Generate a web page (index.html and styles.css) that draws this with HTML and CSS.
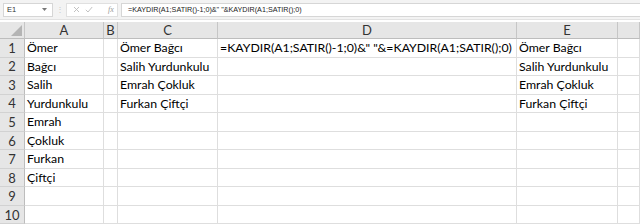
FILE: index.html
```html
<!DOCTYPE html>
<html lang="tr">
<head>
  <meta charset="UTF-8">
  <title>Excel - KAYDIR</title>
  <link rel="stylesheet" href="styles.css">
</head>
<body>
  <div class="formula-bar">
    <div class="name-box">
      <span>E1</span>
      <svg class="arrow" width="5" height="3" viewBox="0 0 5 3"><path d="M0 0 L5 0 L2.5 3 Z" fill="#777"/></svg>
    </div>
    <div class="grip">⋮</div>
    <div class="fx-buttons">
      <svg width="7" height="7" viewBox="0 0 7 7"><path d="M1 1 L6 6 M6 1 L1 6" stroke="#bbb" stroke-width="0.9" fill="none"/></svg>
      <svg width="8" height="7" viewBox="0 0 8 7"><path d="M0.8 3.8 L3 6 L7.2 1" stroke="#bbb" stroke-width="0.9" fill="none"/></svg>
      <span class="fx">fx</span>
    </div>
    <div class="formula-input">=KAYDIR(A1;SATIR()-1;0)&amp;" "&amp;KAYDIR(A1;SATIR();0)</div>
  </div>

  <div class="sheet">
    <div class="hd corner"><span class="tri"></span></div>
    <div class="hd col">A</div>
    <div class="hd col">B</div>
    <div class="hd col">C</div>
    <div class="hd col">D</div>
    <div class="hd col">E</div>
    <div class="hd col"></div>

    <div class="hd row">1</div><div class="cell">Ömer</div><div class="cell"></div><div class="cell">Ömer Bağcı</div><div class="cell">=KAYDIR(A1;SATIR()-1;0)&amp;" "&amp;=KAYDIR(A1;SATIR();0)</div><div class="cell">Ömer Bağcı</div><div class="cell"></div>
    <div class="hd row">2</div><div class="cell">Bağcı</div><div class="cell"></div><div class="cell">Salih Yurdunkulu</div><div class="cell"></div><div class="cell">Salih Yurdunkulu</div><div class="cell"></div>
    <div class="hd row">3</div><div class="cell">Salih</div><div class="cell"></div><div class="cell">Emrah Çokluk</div><div class="cell"></div><div class="cell">Emrah Çokluk</div><div class="cell"></div>
    <div class="hd row">4</div><div class="cell">Yurdunkulu</div><div class="cell"></div><div class="cell">Furkan Çiftçi</div><div class="cell"></div><div class="cell">Furkan Çiftçi</div><div class="cell"></div>
    <div class="hd row">5</div><div class="cell">Emrah</div><div class="cell"></div><div class="cell"></div><div class="cell"></div><div class="cell"></div><div class="cell"></div>
    <div class="hd row">6</div><div class="cell">Çokluk</div><div class="cell"></div><div class="cell"></div><div class="cell"></div><div class="cell"></div><div class="cell"></div>
    <div class="hd row">7</div><div class="cell">Furkan</div><div class="cell"></div><div class="cell"></div><div class="cell"></div><div class="cell"></div><div class="cell"></div>
    <div class="hd row">8</div><div class="cell">Çiftçi</div><div class="cell"></div><div class="cell"></div><div class="cell"></div><div class="cell"></div><div class="cell"></div>
    <div class="hd row">9</div><div class="cell"></div><div class="cell"></div><div class="cell"></div><div class="cell"></div><div class="cell"></div><div class="cell"></div>
    <div class="hd row">10</div><div class="cell"></div><div class="cell"></div><div class="cell"></div><div class="cell"></div><div class="cell"></div><div class="cell"></div>
  </div>
</body>
</html>
```

FILE: styles.css
```css
body {
  margin: 0;
  width: 640px;
  height: 224px;
  overflow: hidden;
  background: #fff;
  font-family: 'Lato', 'Liberation Sans', sans-serif;
  color: #000;
}

.formula-bar {
  display: flex;
  align-items: center;
  height: 20px;
  padding: 0 0 0 3px;
  background: #f3f3f3;
  border-bottom: 1px solid #e2e2e2;
  box-sizing: border-box;
  margin-bottom: 2px;
  font-family: 'Liberation Sans', sans-serif;
}

.name-box {
  display: flex;
  align-items: center;
  justify-content: space-between;
  width: 50px;
  height: 14px;
  padding: 0 5px 0 3px;
  box-sizing: border-box;
  background: #fff;
  border: 1px solid #d6d6d6;
  font-size: 7.5px;
  color: #333;
}

.grip {
  width: 13px;
  text-align: center;
  font-size: 8px;
  color: #c8c8c8;
}

.fx-buttons {
  display: flex;
  align-items: center;
  gap: 5px;
  width: 52px;
  height: 14px;
  padding-left: 6px;
  box-sizing: border-box;
  background: #fff;
  border: 1px solid #e0e0e0;
}

.fx {
  margin-left: 10px;
  font-family: 'Liberation Serif', serif;
  font-style: italic;
  font-size: 8px;
  color: #999;
}

.formula-input {
  flex: 1;
  height: 14px;
  margin-left: 3px;
  padding-left: 6px;
  box-sizing: border-box;
  background: #fff;
  border: 1px solid #d6d6d6;
  border-right: none;
  font-size: 7.2px;
  line-height: 12px;
  color: #222;
  white-space: nowrap;
}

.sheet {
  display: grid;
  grid-template-columns: 25px 79px 14px 100px 299px 101px 22px;
  grid-template-rows: 17px repeat(10, 18.55px);
}

.sheet > div {
  box-sizing: border-box;
  border-right: 1px solid #dedede;
  border-bottom: 1px solid #dedede;
  white-space: nowrap;
}

.hd {
  background: #e6e6e6;
  color: #333;
  font-size: 13px;
  display: flex;
  align-items: center;
  justify-content: center;
}

.sheet > .hd.col,
.sheet > .corner {
  border-right-color: #c6c6c6;
  border-bottom-color: #bdbdbd;
}

.sheet > .hd.row {
  border-right-color: #bdbdbd;
  border-bottom-color: #d2d2d2;
}

.corner {
  position: relative;
}

.tri {
  position: absolute;
  right: 2px;
  bottom: 2px;
  width: 0;
  height: 0;
  border-left: 11px solid transparent;
  border-bottom: 11px solid #b4b4b4;
}

.cell {
  font-size: 12.3px;
  line-height: 17px;
  padding-left: 2px;
  overflow: visible;
}
```
